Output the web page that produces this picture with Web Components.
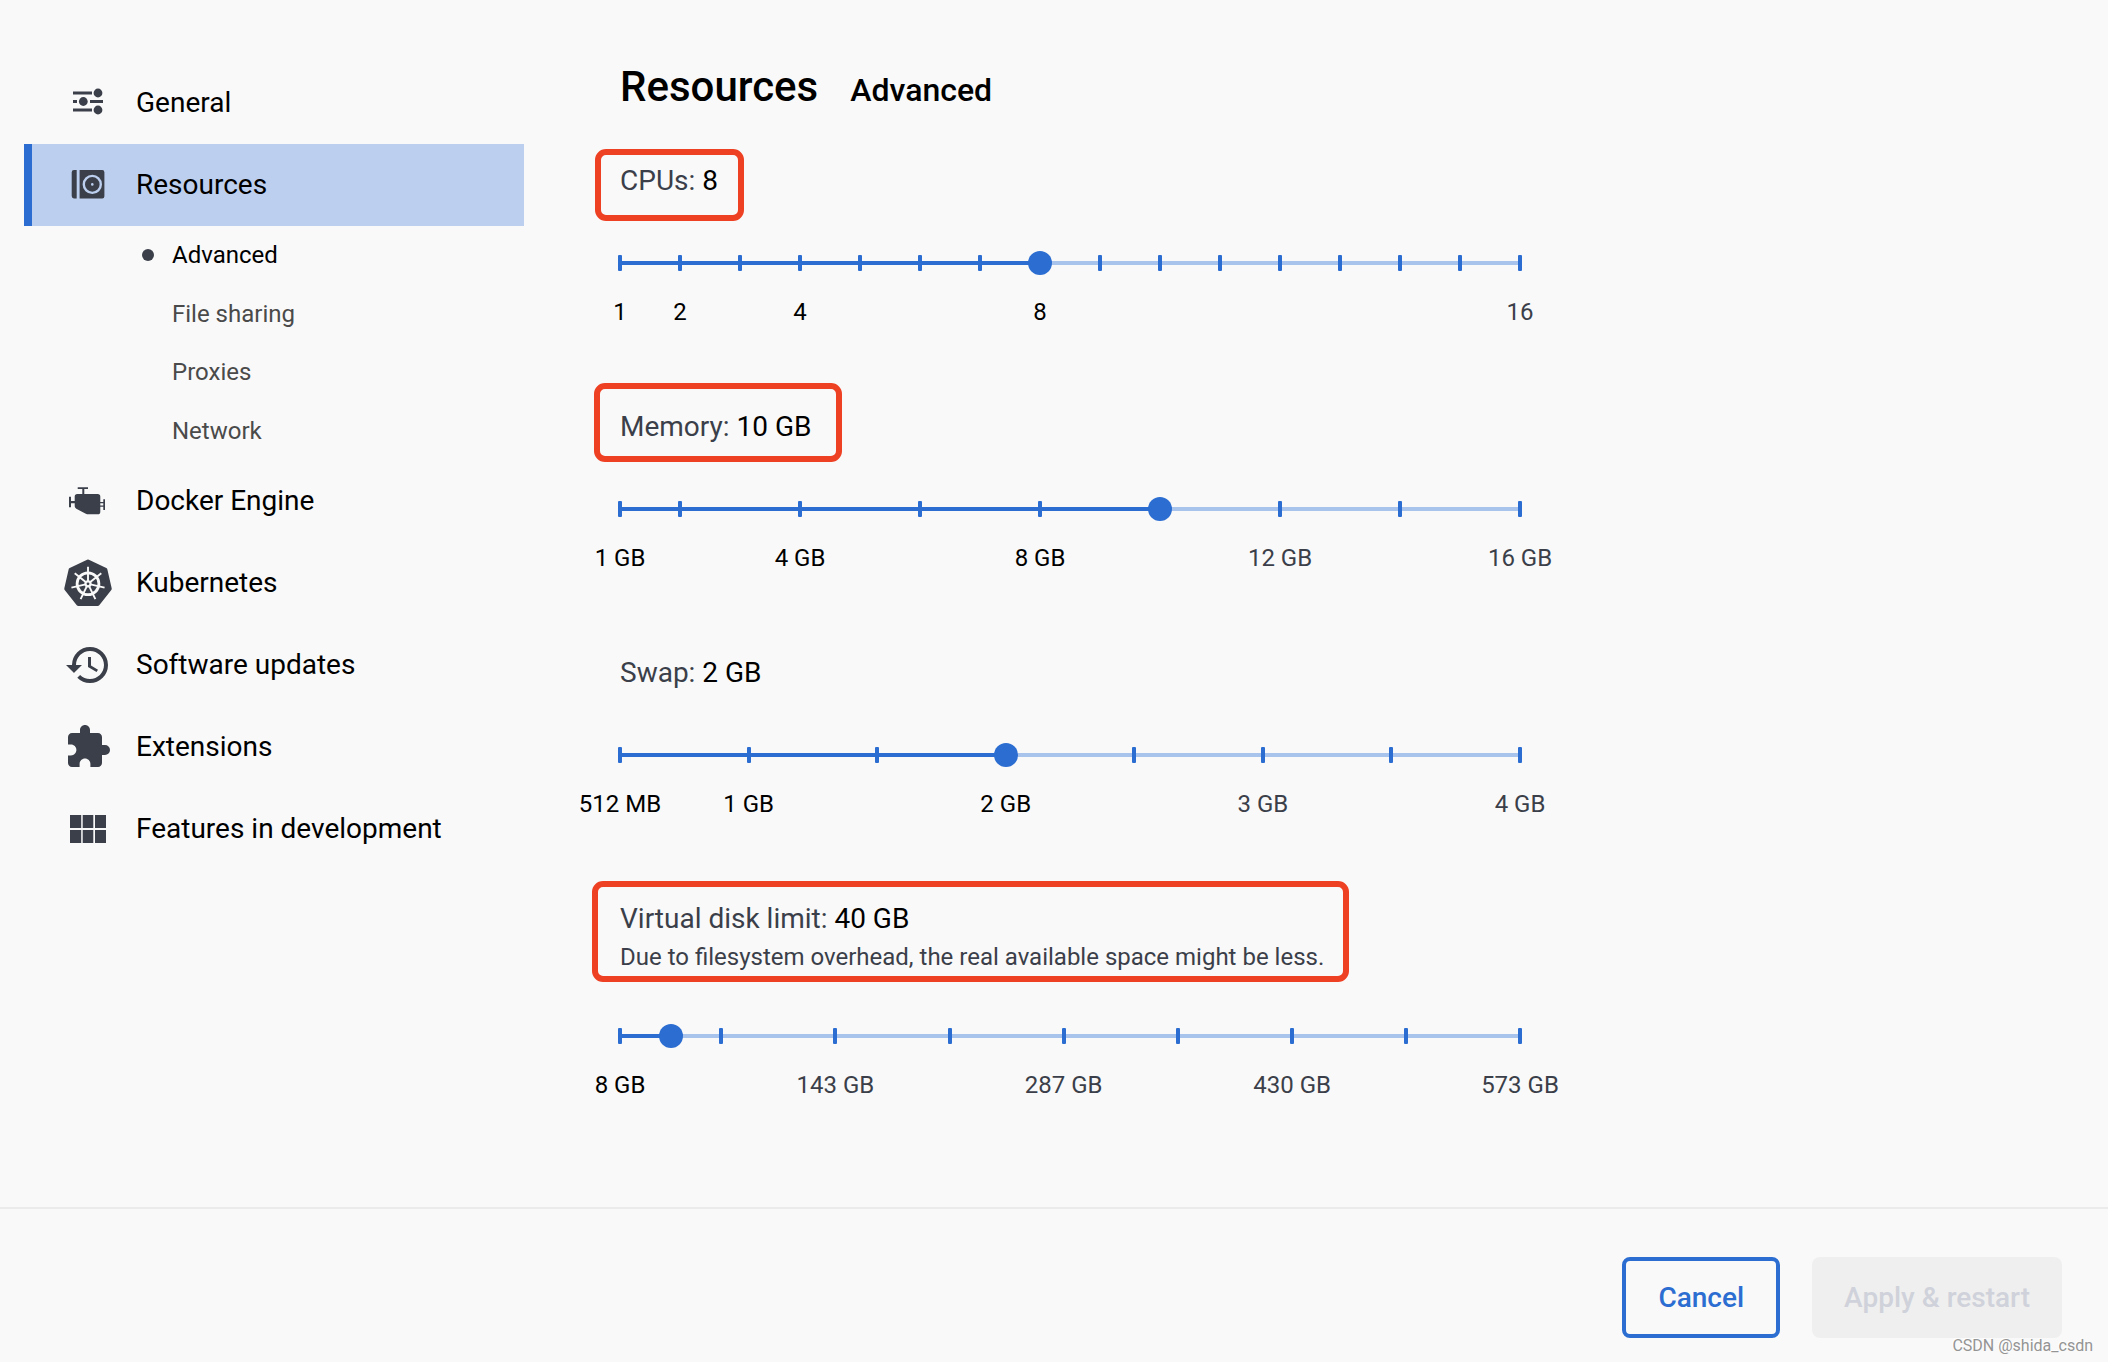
<!DOCTYPE html>
<html lang="en">
<head>
<meta charset="utf-8">
<title>Settings - Resources</title>
<style>
  :root {
    --blue: #2b6dd1;
    --track: #a9c4ec;
    --selected: #bccfef;
    --bg: #f9f9f9;
    --slate: #3b3f49;
    --marker: #ee4023;
  }
  body { margin: 0; background: var(--bg); color: #000; font-family: Roboto, "Liberation Sans", sans-serif; }
</style>
</head>
<body>
<settings-window>
  <settings-nav slot="nav">
    <nav-item icon="general">General</nav-item>
    <nav-item icon="resources" selected>Resources</nav-item>
    <nav-group>
      <nav-subitem selected>Advanced</nav-subitem>
      <nav-subitem>File sharing</nav-subitem>
      <nav-subitem>Proxies</nav-subitem>
      <nav-subitem>Network</nav-subitem>
    </nav-group>
    <nav-item icon="engine">Docker Engine</nav-item>
    <nav-item icon="kubernetes">Kubernetes</nav-item>
    <nav-item icon="history">Software updates</nav-item>
    <nav-item icon="extension">Extensions</nav-item>
    <nav-item icon="modules">Features in development</nav-item>
  </settings-nav>

  <page-heading><span slot="title">Resources</span><span slot="section">Advanced</span></page-heading>
  <resource-slider name="CPUs" text="8" min="1" max="16" value="8" marker="-11px -26px -19px -25px"
    marks="1=1;2=2;3;4=4;5;6;7;8=8;9;10;11;12;13;14;15;16=16"></resource-slider>
  <resource-slider name="Memory" text="10 GB" min="1" max="16" value="10" marker="-23px -31px -14px -26px"
    marks="1=1 GB;2;4=4 GB;6;8=8 GB;10;12=12 GB;14;16=16 GB"></resource-slider>
  <resource-slider name="Swap" text="2 GB" min="0.5" max="4" step="0.5" value="2"
    marks="0.5=512 MB;1=1 GB;1.5;2=2 GB;2.5;3=3 GB;3.5;4=4 GB"></resource-slider>
  <resource-slider name="Virtual disk limit" text="40 GB" min="8" max="573" value="40" marker="-17px -25px -7px -28px"
    note="Due to filesystem overhead, the real available space might be less."
    marks="8=8 GB;71.6;143.25=143 GB;215;286.5=287 GB;358;430=430 GB;501.5;573=573 GB"></resource-slider>

  <action-button slot="actions">Cancel</action-button>
  <action-button slot="actions" disabled>Apply &amp; restart</action-button>
  <corner-credit slot="credit">CSDN @shida_csdn</corner-credit>
</settings-window>

<script>
const ICONS = {
  general: `<g stroke="currentColor" stroke-width="3"><path d="M9 14h19M9 22.5h4M26 22.5h13M9 31h19"/></g>
    <circle cx="34" cy="14" r="4.4"/><circle cx="19.3" cy="22.5" r="4.4"/><circle cx="34" cy="31" r="4.4"/>`,
  resources: `<path d="M10 9h2.7v28.4H10a2.3 2.3 0 0 1-2.3-2.3V11.3A2.3 2.3 0 0 1 10 9zM15.6 9h22.6a2.2 2.2 0 0 1 2.2 2.2v24a2.2 2.2 0 0 1-2.2 2.2H15.6z"/>
    <circle cx="28.3" cy="23.4" r="8.5" fill="none" stroke="var(--selected)" stroke-width="2.4"/><circle cx="28.3" cy="23.4" r="1.3" fill="var(--selected)"/>`,
  engine: `<path transform="translate(0 -1)" d="M13.7 11.3H24V13h-3.7v5h13.4q2.6 0 2.6 2.6V26h3v-2.7H41V34h-1.7v-3.3h-3v5q0 2.6-2.6 2.6H25q-2 0-3.7-.9l-9-4.7q-1.6-1-1.6-2.4v-3H7v4H5V20.7h2V25h3.7v-4.4q0-2.6 2.6-2.6h5v-5h-4.6zM36.3 27.3v2.2h3v-2.2z"/>`,
  kubernetes: (() => {
    const cy = 24.8;
    const pt = (r, i) => { const a = i * 2 * Math.PI / 7; return `${(24 + r * Math.sin(a)).toFixed(2)} ${(cy - r * Math.cos(a)).toFixed(2)}`; };
    const n = [0, 1, 2, 3, 4, 5, 6];
    return `<path stroke="currentColor" stroke-width="4" stroke-linejoin="round" d="M${n.map(i => pt(22.3, i)).join("L")}z"/>
      <g stroke="var(--bg)" fill="none"><circle cx="24" cy="${cy}" r="10.9" stroke-width="2.8"/>
      <path stroke-width="1.9" d="${n.map(i => `M${pt(2.5, i)}L${pt(17, i)}`).join("")}"/></g>
      <circle cx="24" cy="${cy}" r="3.6" fill="var(--bg)"/><circle cx="24" cy="${cy}" r="1.4"/>`;
  })(),
  history: `<path transform="scale(2)" d="M13 3a9 9 0 0 0-9 9H1l3.89 3.89.07.14L9 12H6c0-3.87 3.13-7 7-7s7 3.13 7 7-3.13 7-7 7c-1.93 0-3.68-.79-4.94-2.06l-1.42 1.42A8.95 8.95 0 0 0 13 21a9 9 0 0 0 0-18zm-1 5v5l4.28 2.54.72-1.21-3.5-2.08V8H12z"/>`,
  extension: `<path transform="scale(2)" d="M20.5 11H19V7c0-1.1-.9-2-2-2h-4V3.5C13 2.12 11.88 1 10.5 1S8 2.12 8 3.5V5H4c-1.1 0-1.99.9-1.99 2v3.8H3.5c1.49 0 2.7 1.21 2.7 2.7s-1.21 2.7-2.7 2.7H2V20c0 1.1.9 2 2 2h3.8v-1.5c0-1.49 1.21-2.7 2.7-2.7s2.7 1.21 2.7 2.7V22H17c1.1 0 2-.9 2-2v-4h1.5a2.5 2.5 0 0 0 0-5z"/>`,
  modules: `<path d="M6 10h11.2v13H6zM18.7 10h10.6v13H18.7zM31 10h11v13H31zM6 25h11.2v13H6zM18.7 25h10.6v13H18.7zM31 25h11v13H31z"/>`
};

class Base extends HTMLElement {
  connectedCallback() {
    if (this.shadowRoot) return;
    this.attachShadow({ mode: "open" }).innerHTML = this.render();
  }
}

customElements.define("settings-window", class extends Base {
  render() { return `<style>
    :host { display: flex; flex-direction: column; min-height: 100vh; position: relative; }
    .body { flex: 1; display: grid; grid-template-columns: 500px minmax(0, 900px); column-gap: 96px; padding: 0 24px; }
    .nav { padding-top: 62px; }
    main { padding-top: 59px; }
    footer { display: flex; justify-content: flex-end; gap: 32px; padding: 48px 46px 24px; border-top: 2px solid #ebebeb; }
    </style>
    <div class="body"><div class="nav"><slot name="nav"></slot></div><main><slot></slot></main></div>
    <footer><slot name="actions"></slot></footer><slot name="credit"></slot>`; }
});

customElements.define("settings-nav", class extends Base {
  render() { return `<style>:host { display: block; } nav { display: flex; flex-direction: column; }</style><nav aria-label="Settings"><slot></slot></nav>`; }
});

customElements.define("nav-item", class extends Base {
  render() { return `<style>
    :host { display: block; }
    a { display: flex; align-items: center; gap: 24px; height: 82px; padding-left: 32px; border-left: 8px solid transparent; box-sizing: border-box; color: #000; font-size: 28px; line-height: 42px; text-decoration: none; }
    :host([selected]) a { background: var(--selected); border-color: var(--blue); }
    svg { flex: none; width: 48px; height: 48px; color: var(--slate); fill: currentColor; }
    </style><a href="#"><svg viewBox="0 0 48 48" aria-hidden="true">${ICONS[this.getAttribute("icon")]}</svg><span><slot></slot></span></a>`; }
});

customElements.define("nav-group", class extends Base {
  render() { return `<style>:host { display: grid; grid-auto-rows: 1fr; height: 234px; }</style><slot></slot>`; }
});

customElements.define("nav-subitem", class extends Base {
  render() { return `<style>
    :host { display: grid; }
    a { display: flex; align-items: center; gap: 18px; padding-left: 118px; color: #4a4a4a; font-size: 24px; line-height: 36px; text-decoration: none; }
    i { width: 12px; height: 12px; border-radius: 50%; }
    :host([selected]) a { color: #000; }
    :host([selected]) i { background: var(--slate); }
    </style><a href="#"><i></i><span><slot></slot></span></a>`; }
});

customElements.define("page-heading", class extends Base {
  render() { return `<style>
    :host { display: block; }
    header { display: flex; align-items: baseline; gap: 32px; margin-bottom: 42px; }
    h1, h2 { margin: 0; font-weight: 500; line-height: 56px; }
    h1 { font-size: 42px; } h2 { font-size: 32px; }
    </style><header><h1><slot name="title"></slot></h1><h2><slot name="section"></slot></h2></header>`; }
});

customElements.define("resource-slider", class extends Base {
  render() {
    const at = n => this.getAttribute(n);
    const min = +at("min"), max = +at("max"), value = +at("value");
    const marks = at("marks").split(";").map(m => { const [v, label] = m.split("="); return { v: +v, label }; });
    const spread = (list, cell) => list.map((m, i) =>
      (i ? `<span class="gap" style="flex-grow:${m.v - list[i - 1].v}"></span>` : "") + `<span class="stop">${cell(m)}</span>`).join("");
    const filled = (value - min) / (max - min) * 100;
    const frame = at("marker") ? `<div class="marker" style="inset:${at("marker")}"></div>` : "";
    return `<style>
    :host { display: block; margin-bottom: 76px; }
    .caption { position: relative; width: fit-content; margin-bottom: 49px; color: var(--slate); }
    label { display: block; font-size: 28px; line-height: 42px; }
    b { color: #000; font-weight: 400; }
    p { margin: 0; font-size: 24px; line-height: 35px; }
    .marker { position: absolute; border: 6px solid var(--marker); border-radius: 11px; pointer-events: none; }
    .slider { display: grid; align-items: center; height: 24px; }
    .slider > * { grid-area: 1 / 1; }
    .track { height: 4px; background: linear-gradient(var(--blue) 0 0) 0 0 / ${filled}% 100% no-repeat var(--track); }
    .row { display: flex; }
    .gap { flex: 1 1 0; }
    .stop { flex: none; width: 0; display: flex; justify-content: center; white-space: nowrap; }
    .tick { flex: none; width: 4px; height: 16px; border-radius: 1px; background: var(--blue); }
    input { appearance: none; width: calc(100% + 24px); height: 24px; margin: 0 -12px; background: none; }
    input::-webkit-slider-thumb { appearance: none; width: 24px; height: 24px; border-radius: 50%; background: var(--blue); }
    .labels { margin-top: 19px; font-size: 24px; line-height: 36px; color: var(--slate); }
    .on { color: #000; }
    </style>
    <div class="caption"><label for="range">${at("name")}: <b>${at("text")}</b></label>${at("note") ? `<p>${at("note")}</p>` : ""}${frame}</div>
    <div class="slider"><div class="track"></div>
      <div class="row">${spread(marks, () => `<span class="tick"></span>`)}</div>
      <input id="range" type="range" min="${min}" max="${max}" step="${at("step") || 1}" value="${value}"></div>
    <div class="row labels">${spread(marks.filter(m => m.label), m => `<span class="${m.v <= value ? "on" : ""}">${m.label}</span>`)}</div>`;
  }
});

customElements.define("action-button", class extends Base {
  render() { return `<style>
    :host { display: block; }
    button { display: block; box-sizing: border-box; padding: 12px 32px; border: 4px solid var(--blue); border-radius: 8px; background: transparent; color: var(--blue); font: 500 28px/49px Roboto, "Liberation Sans", sans-serif; }
    button:disabled { padding: 16px 32px; border: 0; background: #efefef; color: #cfd2da; }
    </style><button type="button" ${this.hasAttribute("disabled") ? "disabled" : ""}><slot></slot></button>`; }
});

customElements.define("corner-credit", class extends Base {
  render() { return `<style>
    :host { position: absolute; right: 15px; bottom: 6px; color: #949494; font: 16px/20px Roboto, "Liberation Sans", sans-serif; text-shadow: -1px -1px 0 #fff; }
    </style><slot></slot>`; }
});
</script>
</body>
</html>
